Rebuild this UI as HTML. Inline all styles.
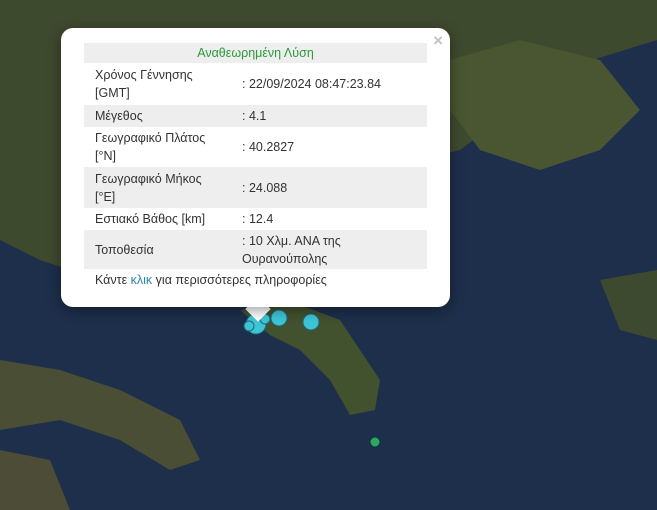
<!DOCTYPE html>
<html><head><meta charset="utf-8"><style>
body{margin:0;width:657px;height:510px;overflow:hidden;background:#1d2f4b;font-family:"Liberation Sans","DejaVu Sans",sans-serif;position:relative}
svg.map{position:absolute;left:0;top:0}
.pop{position:absolute;left:61px;top:28px;width:389px;height:279px;background:#fff;border-radius:12px;box-shadow:0 3px 14px rgba(0,0,0,.4)}
.tip{position:absolute;left:249px;top:300px;width:18px;height:18px;background:#fff;transform:rotate(45deg)}
.x{position:absolute;right:7px;top:3px;color:#c3c3c3;font-size:17px;font-weight:bold}
table{position:absolute;left:23px;top:15px;width:343px;border-collapse:collapse;font-size:12.5px;color:#333;line-height:18px}
td{padding:0 0 0 11px;vertical-align:middle}
td.v{padding-left:3px}
tr.g{background:#eee}
.h td{color:#2a9a3a;text-align:center}
.f{position:absolute;left:34px;top:245px;font-size:12.5px;color:#333}
.f span{color:#2a86a8}
</style></head><body>
<svg class="map" width="657" height="510">
<path d="M0 0H657V40L560 70 500 120 460 150 420 160 450 200 400 220 300 230 200 250 100 280 40 260 0 240Z" fill="#3e4a2e"/>
<path d="M450 60 520 40 600 60 640 110 600 150 540 170 480 150 450 110Z" fill="#4a5532"/>
<path d="M600 280 657 270V340L620 330Z" fill="#3e4a30"/>
<path d="M240 310 300 305 340 320 360 350 380 380 375 410 350 415 330 380 300 350 270 335Z" fill="#42512e"/>
<path d="M0 360 60 370 120 390 180 420 200 460 170 470 120 440 60 420 0 430Z" fill="#4a4e34"/>
<path d="M0 450 50 460 70 510H0Z" fill="#4d4c36"/>
<circle cx="256" cy="324" r="10" fill="#3fc4d6" stroke="#1b6b78"/>
<circle cx="279" cy="318" r="8" fill="#3fc4d6" stroke="#1b6b78"/>
<circle cx="311" cy="322" r="8" fill="#3fc4d6" stroke="#1b6b78"/>
<circle cx="249" cy="326" r="5" fill="#3fc4d6" stroke="#1b6b78"/>
<circle cx="265" cy="319" r="5" fill="#3fc4d6" stroke="#1b6b78"/>
<circle cx="375" cy="442" r="5" fill="#2fa85a" stroke="#135"/>
</svg>
<div class="tip"></div>
<div class="pop">
<div class="x">×</div>
<table>
<tr class="g h" style="height:20px"><td colspan="2" style="padding-left:0">Αναθεωρημένη Λύση</td></tr>
<tr style="height:42px"><td style="width:144px">Χρόνος Γέννησης<br>[GMT]</td><td class="v">: 22/09/2024 08:47:23.84</td></tr>
<tr class="g" style="height:22px"><td>Μέγεθος</td><td class="v">: 4.1</td></tr>
<tr style="height:40px"><td>Γεωγραφικό Πλάτος<br>[°N]</td><td class="v">: 40.2827</td></tr>
<tr class="g" style="height:41px"><td>Γεωγραφικό Μήκος<br>[°E]</td><td class="v">: 24.088</td></tr>
<tr style="height:22px"><td>Εστιακό Βάθος [km]</td><td class="v">: 12.4</td></tr>
<tr class="g" style="height:39px"><td>Τοποθεσία</td><td class="v">: 10 Χλμ. ΑΝΑ της<br>Ουρανούπολης</td></tr>
</table>
<div class="f">Κάντε <span>κλικ</span> για περισσότερες πληροφορίες</div>
</div>
</body></html>
